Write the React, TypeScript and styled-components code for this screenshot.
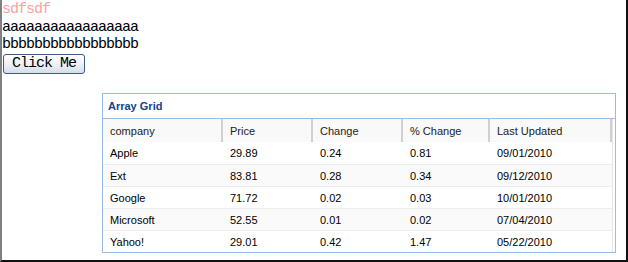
import styled, { createGlobalStyle } from 'styled-components';

const GlobalStyle = createGlobalStyle`
  html, body {
    margin: 0;
    padding: 0;
    background: #fff;
  }
`;

const Frame = styled.div`
  box-sizing: border-box;
  width: 628px;
  height: 262px;
  border-left: 2px solid #808080;
  border-right: 2px solid #111;
  border-bottom: 2px solid #111;
  padding: 1px 0 0 0;
  font-family: 'Liberation Mono', 'DejaVu Sans Mono', monospace;
  font-size: 15px;
  letter-spacing: -1px;
  line-height: 17.6px;
  color: #000;
`;

const Line = styled.div<{ $tone?: string }>`
  color: ${(p) => p.$tone || '#000'};
  white-space: pre;
`;

const ClickButton = styled.button`
  box-sizing: border-box;
  display: block;
  margin: 0 0 0 1px;
  width: 82px;
  height: 20px;
  padding: 0;
  border: 1px solid #3d5a82;
  border-radius: 3px;
  background: linear-gradient(#ffffff 0%, #f1f3f7 45%, #d6dde9 100%);
  font-family: 'Liberation Mono', 'DejaVu Sans Mono', monospace;
  font-size: 15px;
  letter-spacing: -1px;
  color: #000;
  line-height: 16px;
`;

const GridPanel = styled.div`
  box-sizing: border-box;
  width: 514px;
  margin: 19px 0 0 100px;
  border: 1px solid #99bbe8;
  font-family: 'Liberation Sans', Arial, sans-serif;
  letter-spacing: 0;
`;

const Title = styled.div`
  height: 24px;
  padding-left: 5px;
  border-bottom: 1px solid #99bbe8;
  font-size: 11px;
  font-weight: bold;
  color: #15428b;
  line-height: 24px;
`;

const Body = styled.div`
  width: 509px;
  border-right: 1px solid #e4e4e4;
`;

const cols = '120px 90px 90px 87px 122px';

const HeadRow = styled.div`
  display: grid;
  grid-template-columns: ${cols};
  height: 23px;
  background: #f9f9f9;
`;

const HeadCell = styled.div`
  padding: 1px 0 0 7px;
  border-right: 2px solid #d0d0d0;
  font-size: 11px;
  line-height: 22px;
  color: #222;
`;

const Row = styled.div<{ $alt?: boolean }>`
  display: grid;
  grid-template-columns: ${cols};
  height: 21px;
  border-top: 1px solid #ededed;
  background: ${(p) => (p.$alt ? '#fafafa' : '#fff')};
  &:first-of-type {
    border-top: none;
    height: 22px;
  }
`;

const Cell = styled.div`
  padding: 1px 0 0 7px;
  font-size: 11px;
  line-height: 20px;
  color: #000;
`;

const rows = [
  ['Apple', '29.89', '0.24', '0.81', '09/01/2010'],
  ['Ext', '83.81', '0.28', '0.34', '09/12/2010'],
  ['Google', '71.72', '0.02', '0.03', '10/01/2010'],
  ['Microsoft', '52.55', '0.01', '0.02', '07/04/2010'],
  ['Yahoo!', '29.01', '0.42', '1.47', '05/22/2010'],
];

export default function App() {
  return (
    <>
      <GlobalStyle />
      <Frame>
        <Line $tone="#f5a3a3">sdfsdf</Line>
        <Line>aaaaaaaaaaaaaaaaa</Line>
        <Line>bbbbbbbbbbbbbbbbb</Line>
        <ClickButton>Click Me</ClickButton>
        <GridPanel>
          <Title>Array Grid</Title>
          <Body>
            <HeadRow>
              {['company', 'Price', 'Change', '% Change', 'Last Updated'].map((h) => (
                <HeadCell key={h}>{h}</HeadCell>
              ))}
            </HeadRow>
            <div>
              {rows.map((r, i) => (
                <Row key={r[0]} $alt={i % 2 === 1}>
                  {r.map((c, j) => (
                    <Cell key={j}>{c}</Cell>
                  ))}
                </Row>
              ))}
            </div>
          </Body>
        </GridPanel>
      </Frame>
    </>
  );
}
